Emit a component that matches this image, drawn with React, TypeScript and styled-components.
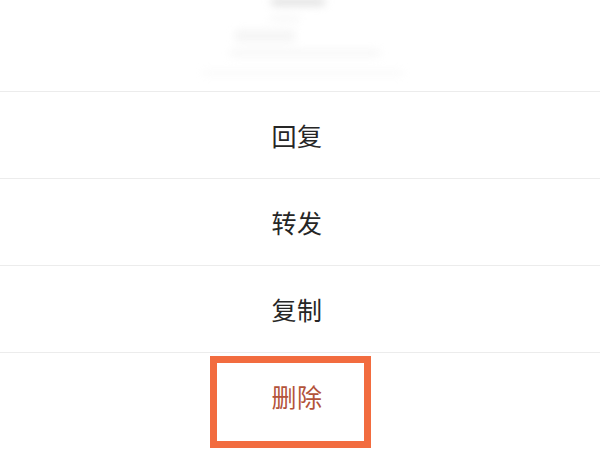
import * as React from "react";
import styled, { createGlobalStyle } from "styled-components";

const GlobalStyle = createGlobalStyle`
    html, body {
        margin: 0;
        padding: 0;
        background: #ffffff;
    }
    body {
        font-family: "Noto Sans CJK SC", "Noto Sans", sans-serif;
    }
`;

const Screen = styled.div`
    width: 600px;
    height: 450px;
    overflow: hidden;
    display: flex;
    flex-direction: column;
    background: #ffffff;
`;

// blurred message preview behind the sheet
const Preview = styled.div`
    height: 91px;
    flex: none;
    display: flex;
    flex-direction: column;
    align-items: center;
    filter: blur(4px);
`;

const Smudge = styled.div<{ $w: number; $h: number; $top: number; $shift: number; $tone: string }>`
    width: ${(p) => p.$w}px;
    height: ${(p) => p.$h}px;
    margin-top: ${(p) => p.$top}px;
    margin-left: ${(p) => p.$shift}px;
    background: ${(p) => p.$tone};
    border-radius: 3px;
`;

const Menu = styled.div`
    display: flex;
    flex-direction: column;
    flex: 1;
`;

const Item = styled.div<{ $danger?: boolean }>`
    position: relative;
    height: 86px;
    flex: none;
    border-top: 1px solid #ececec;
    display: flex;
    align-items: center;
    justify-content: center;
    padding-right: 6px;
    font-size: 25px;
    line-height: 1;
    letter-spacing: 0.5px;
    color: ${(p) => (p.$danger ? "#b3533a" : "#262626")};
`;

const Highlight = styled.div`
    position: absolute;
    left: 210px;
    top: 3px;
    width: 161px;
    height: 92px;
    box-sizing: border-box;
    border: 7px solid #f26c3f;
    pointer-events: none;
`;

const items = ["回复", "转发", "复制"];

export default function App() {
    return (
        <>
            <GlobalStyle />
            <Screen>
                <Preview>
                    <Smudge $w={54} $h={6} $top={-1} $shift={-4} $tone="#d9d9d9" />
                    <Smudge $w={30} $h={3} $top={12} $shift={-30} $tone="#f0f0f0" />
                    <Smudge $w={60} $h={12} $top={10} $shift={-70} $tone="#f5f5f5" />
                    <Smudge $w={150} $h={6} $top={8} $shift={10} $tone="#f5f5f5" />
                    <Smudge $w={200} $h={2} $top={16} $shift={6} $tone="#f0f0f0" />
                </Preview>
                <Menu>
                    {items.map((label) => (
                        <Item key={label}>{label}</Item>
                    ))}
                    <Item $danger>
                        删除
                        <Highlight />
                    </Item>
                </Menu>
            </Screen>
        </>
    );
}
